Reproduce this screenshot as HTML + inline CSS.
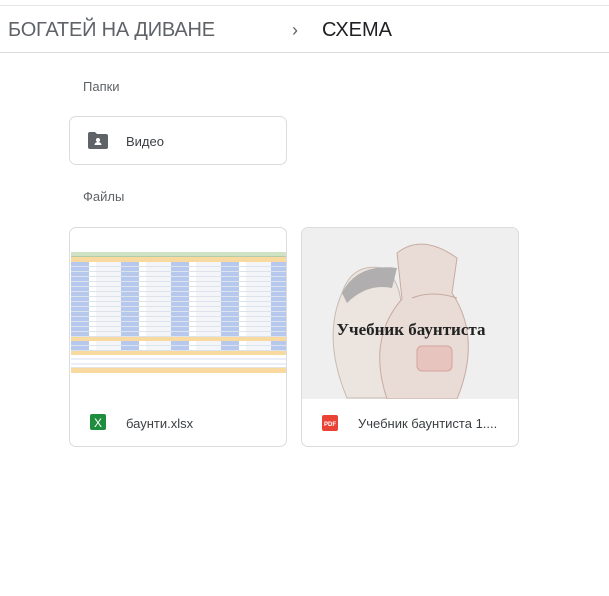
<!DOCTYPE html>
<html><head><meta charset="utf-8"><style>
*{box-sizing:border-box;margin:0;padding:0}
body{width:609px;height:596px;background:#fff;font-family:"Liberation Sans",Arial,sans-serif;position:relative;overflow:hidden}
.top{position:absolute;left:0;top:0;width:609px;height:6px;border-bottom:1px solid #e6e6e6}
.hdr{position:absolute;left:0;top:6px;width:609px;height:47px;border-bottom:1px solid #dadce0}
.bc1{position:absolute;left:8px;top:13px;font-size:20px;color:#5f6368;letter-spacing:-0.2px}
.chev{position:absolute;left:292px;top:14px;font-size:18px;color:#5f6368}
.bc2{position:absolute;left:322px;top:13px;font-size:20px;color:#202124}
.lbl{position:absolute;left:83px;font-size:13px;color:#5f6368}
.card{position:absolute;border:1px solid #dadce0;border-radius:7px;background:#fff;overflow:hidden}
.name{position:absolute;font-size:13px;color:#3c4043}
.sheet{position:absolute;left:1px;top:24px;width:216px;height:124px;background:#fff}
.row{height:5px;border-bottom:1px solid #dde3ea;background:repeating-linear-gradient(90deg,#b7c8ee 0 18px,#fff 18px 25px,#f3f5f9 25px 50px)}
</style></head><body>
<div class="top"></div>
<div class="hdr">
<div class="bc1">БОГАТЕЙ НА ДИВАНЕ</div>
<div class="chev">&#x203A;</div>
<div class="bc2">СХЕМА</div>
</div>
<div class="lbl" style="top:79px">Папки</div>
<div class="card" style="left:69px;top:116px;width:218px;height:49px">
<svg style="position:absolute;left:18px;top:15px" width="20" height="17" viewBox="0 0 20 17"><path d="M0 2a2 2 0 0 1 2-2h5l2 2h9a2 2 0 0 1 2 2v11a2 2 0 0 1-2 2H2a2 2 0 0 1-2-2z" fill="#5f6368"/><circle cx="10" cy="8" r="2" fill="#fff"/><path d="M6.5 13c0-2 2-3 3.5-3s3.5 1 3.5 3z" fill="#fff"/></svg>
<div class="name" style="left:56px;top:17px">Видео</div>
</div>
<div class="lbl" style="top:189px">Файлы</div>
<div class="card" style="left:69px;top:227px;width:218px;height:220px">
<div class="sheet">
<div style="height:5px;background:#cfe2c4;border-bottom:1px solid #b5cca8"></div>
<div style="height:5px;background:#f8d9a0"></div>
<div class="row"></div><div class="row"></div><div class="row"></div><div class="row"></div><div class="row"></div><div class="row"></div><div class="row"></div><div class="row"></div><div class="row"></div><div class="row"></div><div class="row"></div><div class="row"></div><div class="row"></div><div class="row"></div><div class="row"></div>
<div style="height:4px;background:#f8d9a0"></div>
<div class="row"></div><div class="row"></div>
<div style="height:4px;background:#f8d9a0"></div>
<div style="height:13px;border-bottom:1px solid #e3e3e3;background:linear-gradient(#fff 3px,#e9eefa 3px 5px,#fff 5px 8px,#e9eefa 8px 10px,#fff 10px)"></div>
<div style="height:5px;background:#f8d9a0"></div>
</div>
<svg style="position:absolute;left:20px;top:186px" width="16" height="16"><rect width="16" height="16" rx="2" fill="#1e8e3e"/><text x="8" y="13" font-family="Liberation Sans" font-size="12" fill="#fff" text-anchor="middle">X</text></svg>
<div class="name" style="left:56px;top:188px">баунти.xlsx</div>
</div>
<div class="card" style="left:301px;top:227px;width:218px;height:220px">
<div style="position:absolute;left:0;top:0;width:218px;height:171px;background:#efefef;overflow:hidden">
<svg width="218" height="171" viewBox="0 0 218 171"><path d="M45 170q-25-60-5-105q10-30 40-25q20 10 20 50q0 40-10 80z" fill="#ece4de" stroke="#c8bbb2"/><path d="M40 65q15-30 55-25l-5 20q-25-5-45 15z" fill="#b0aeae"/><path d="M95 25q25-20 60 5l-5 35q30 45 5 106H85q-20-60 15-100z" fill="#e9dcd6" stroke="#c7aba0"/><path d="M110 70q20-8 45 0" stroke="#c7aba0" fill="none"/><rect x="115" y="118" width="35" height="25" rx="5" fill="#e8c4bf" stroke="#d2a39c"/></svg>
<div style="position:absolute;left:0;top:92px;width:218px;text-align:center;font-family:'Liberation Serif',serif;font-weight:bold;font-size:17px;color:#222">Учебник баунтиста</div>
</div>
<svg style="position:absolute;left:20px;top:187px" width="16" height="16"><rect width="16" height="16" rx="2" fill="#ea4335"/><text x="8" y="11" font-family="Liberation Sans" font-weight="bold" font-size="6" fill="#fff" text-anchor="middle">PDF</text></svg>
<div class="name" style="left:56px;top:188px">Учебник баунтиста 1....</div>
</div>
</body></html>
